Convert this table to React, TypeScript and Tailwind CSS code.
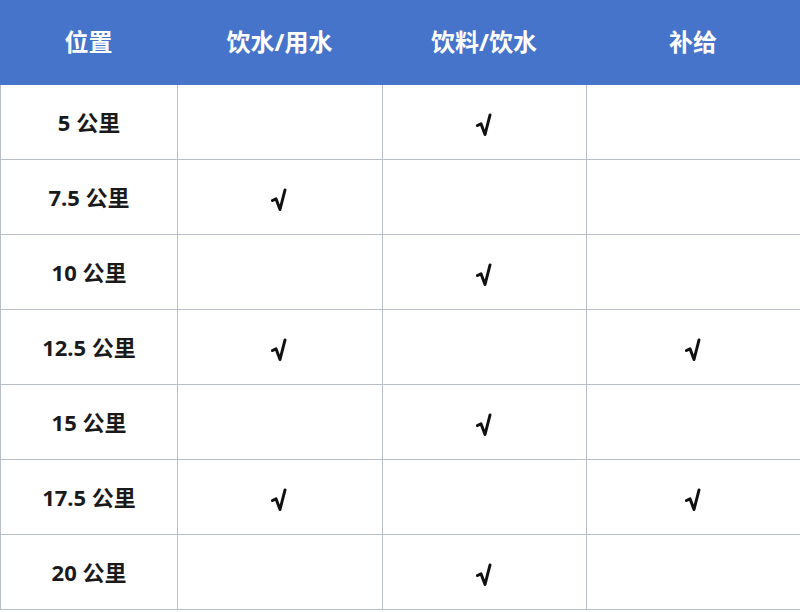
import React from 'react';

const rows = [
    { pos: '5 公里', a: false, b: true, c: false },
    { pos: '7.5 公里', a: true, b: false, c: false },
    { pos: '10 公里', a: false, b: true, c: false },
    { pos: '12.5 公里', a: true, b: false, c: true },
    { pos: '15 公里', a: false, b: true, c: false },
    { pos: '17.5 公里', a: true, b: false, c: true },
    { pos: '20 公里', a: false, b: true, c: false },
];

const cols = ['w-[177px]', 'w-[205px]', 'w-[204px]', 'flex-1'];

// hand-drawn tick, the font √ has an overbar the picture doesn't
function Check({ on }: { on: boolean }) {
    if (!on) return null;
    return (
        <svg width="16" height="24" viewBox="0 0 16 24" className="translate-y-[3px] -translate-x-[1px]">
            <path
                d="M1.5 12.5 L5 10.8 L9 21.5 L14 2"
                fill="none"
                stroke="#111"
                strokeWidth="3"
                strokeLinecap="round"
                strokeLinejoin="round"
            />
        </svg>
    );
}

export default function App() {
    return (
        <div
            className="w-[800px] h-[612px] bg-white overflow-hidden"
            style={{ fontFamily: '"Noto Sans", "Noto Sans CJK SC", sans-serif' }}
        >
            {/* header */}
            <div className="flex h-[85px] bg-[#4674cb] text-white text-[24px] font-bold">
                {['位置', '饮水/用水', '饮料/饮水', '补给'].map((t, i) => (
                    <div key={t} className={`${cols[i]} flex items-center justify-center pb-[2px]`}>
                        {t}
                    </div>
                ))}
            </div>

            {/* body */}
            <div className="border-l border-[#b9c0cc]">
                {rows.map((r) => (
                    <div key={r.pos} className="flex h-[75px] border-b border-[#b9c0cc]">
                        <div className={`${cols[0]} flex items-center justify-center border-r border-[#b9c0cc] text-[22px] font-bold text-[#1a1a1a]`}>
                            {r.pos}
                        </div>
                        <div className={`${cols[1]} flex items-center justify-center border-r border-[#b9c0cc]`}>
                            <Check on={r.a} />
                        </div>
                        <div className={`${cols[2]} flex items-center justify-center border-r border-[#b9c0cc]`}>
                            <Check on={r.b} />
                        </div>
                        <div className={`${cols[3]} flex items-center justify-center`}>
                            <Check on={r.c} />
                        </div>
                    </div>
                ))}
            </div>
        </div>
    );
}
